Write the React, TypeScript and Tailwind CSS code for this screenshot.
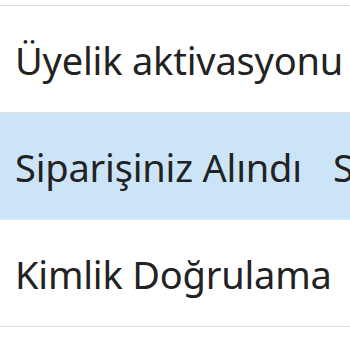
const ROWS = [
  { name: 'Üyelik aktivasyonu', extra: '', active: false },
  { name: 'Siparişiniz Alındı', extra: 'S', active: true },
  { name: 'Kimlik Doğrulama', extra: '', active: false },
]

export default function App() {
  return (
    <div className="w-[350px] h-[350px] overflow-hidden bg-white pt-[5px] font-['Noto_Sans',sans-serif]">
      <div className="border-t border-[#dcdcdc]">
        {ROWS.map((row) => (
          <div
            key={row.name}
            className={`h-[107px] flex items-center whitespace-nowrap border-b ${
              row.active ? 'bg-[#cce4f7] border-[#dde9f3]' : 'bg-white border-[#dedede]'
            }`}
          >
            <span className="pl-[15px] pt-[3px] w-[333px] shrink-0 text-[38px] text-[#222] tracking-[-0.2px]">
              {row.name}
            </span>
            <span className="pt-[3px] text-[38px] text-[#222]">{row.extra}</span>
          </div>
        ))}
      </div>
    </div>
  )
}
